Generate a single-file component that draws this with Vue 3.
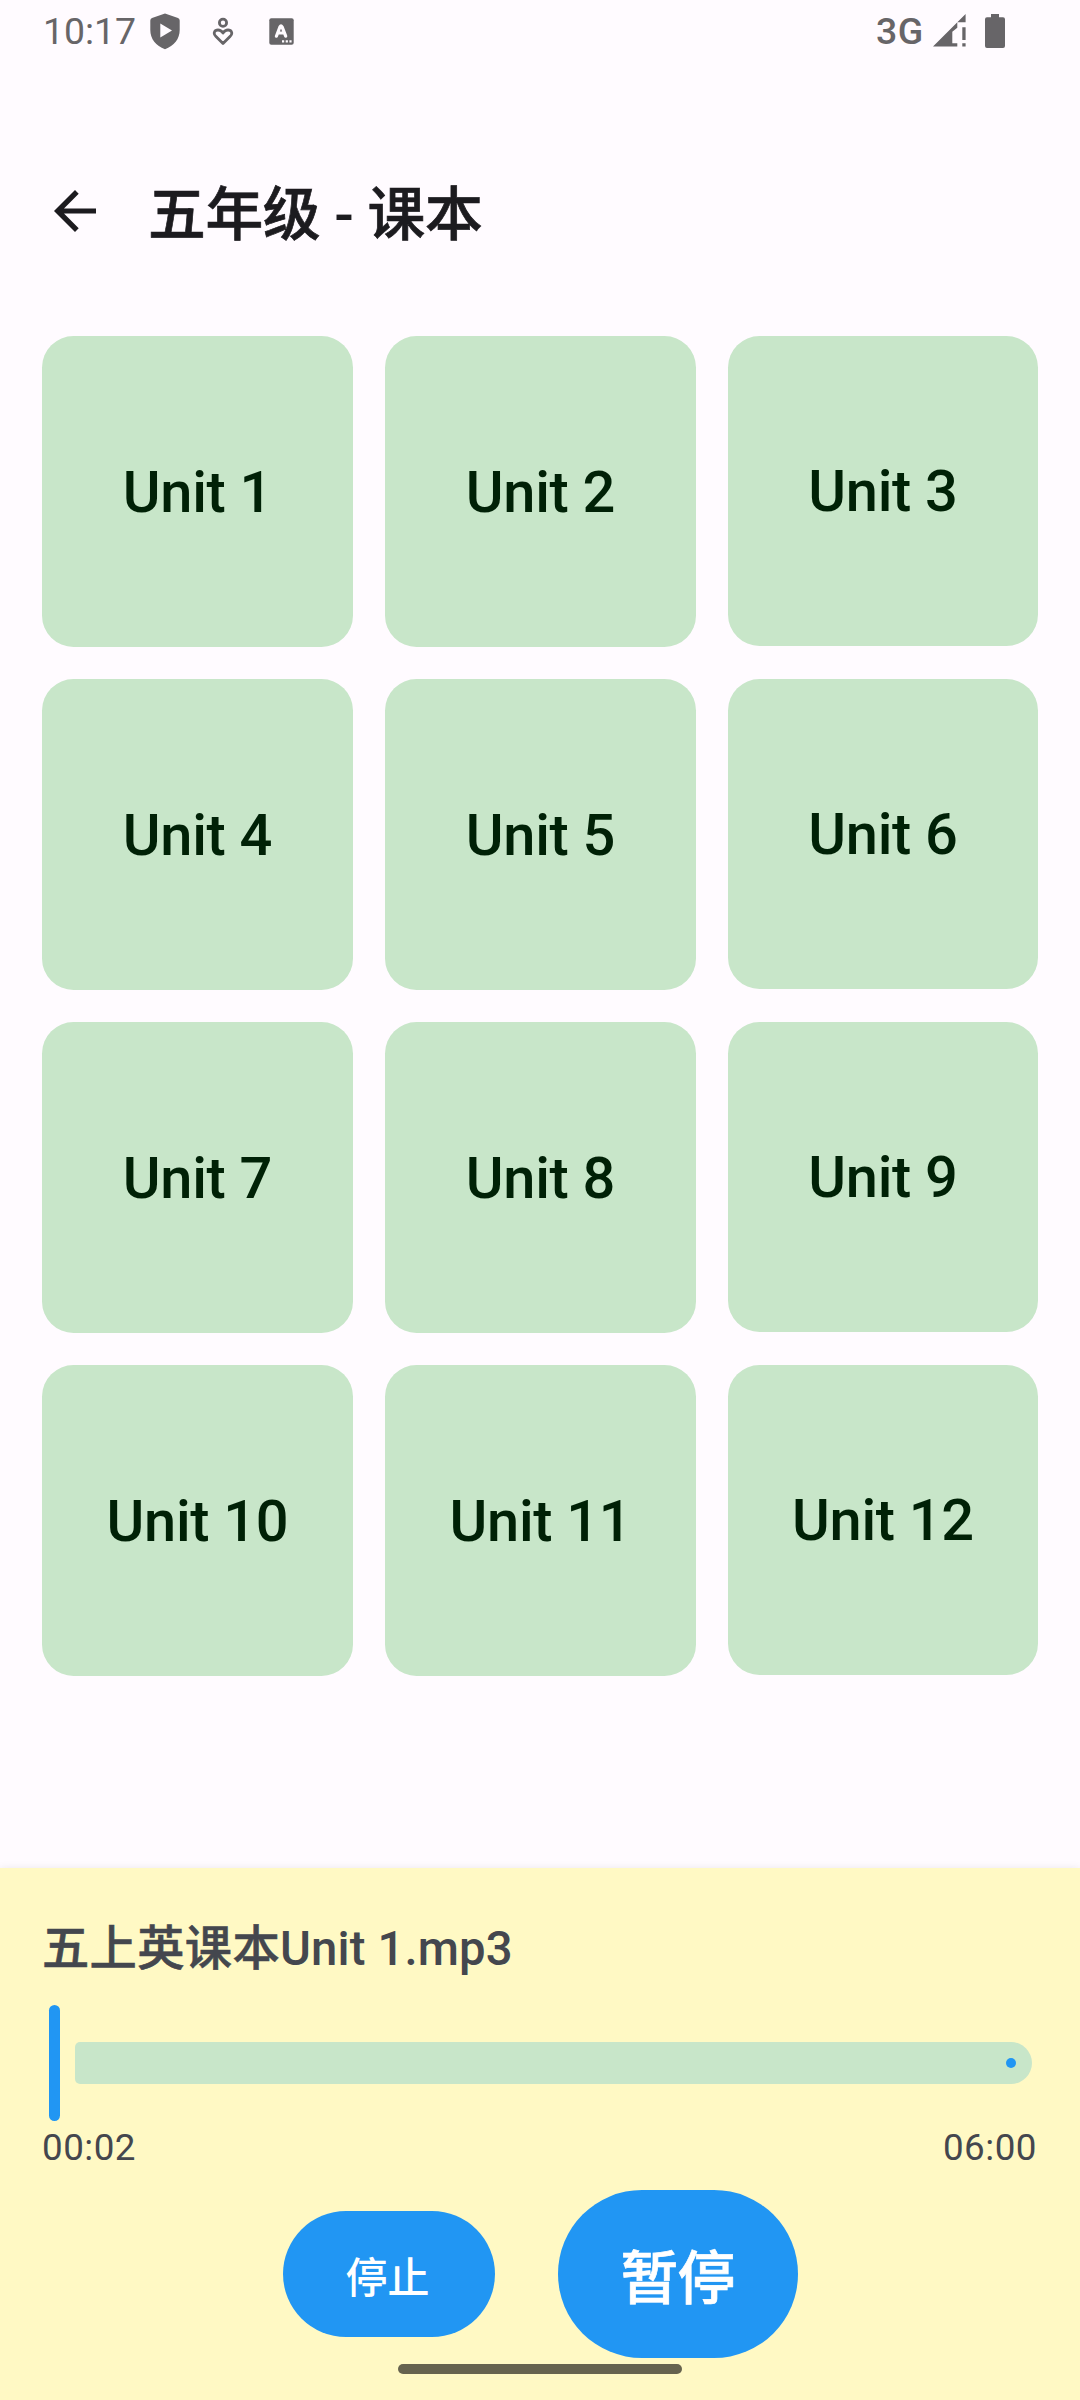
<script setup>
import { ref } from 'vue'

const units = ref(Array.from({ length: 12 }, (_, i) => `Unit ${i + 1}`))
const track = ref({ book: '五上英课本', file: 'Unit 1.mp3', position: '00:02', duration: '06:00' })
</script>

<template>
  <div class="screen">
    <header class="status">
      <span class="clock">10:17</span>
      <svg class="shield" width="30" height="37" viewBox="0 0 30 37">
        <path fill="#676568" fill-rule="evenodd" d="M15 0.5 28 5Q29.7 5.8 29.7 7.5V17C29.7 26 24 33 15 36.2 6 33 .3 26 .3 17V7.5Q.3 5.8 2 5ZM10.3 10.5V24.5L22 17.5Z" />
      </svg>
      <svg class="care" width="22" height="30" viewBox="0 0 22 30" fill="none" stroke="#676568" stroke-width="2.8">
        <circle cx="11" cy="5.7" r="3.6" />
        <path stroke-linejoin="round" d="M11 26.6 4 19.6C.5 16 2.8 13 6 13 8.3 13 9.6 14 11 16 12.4 14 13.7 13 16 13 19.2 13 21.5 16 18 19.6Z" />
      </svg>
      <svg class="caption" width="25" height="27" viewBox="0 0 25 27">
        <rect x=".3" y=".3" width="24.4" height="26.4" rx="2" fill="#676568" />
        <path d="M7.4 18.2 11 8.7Q12 7 13 8.7L16.7 18.2M9.2 15H15" fill="none" stroke="#fffbff" stroke-width="3.2" stroke-linejoin="round" stroke-linecap="round" />
        <path d="M13 22.2h2.2v2.2H13zM16.7 22.2h2.2v2.2h-2.2zM20.4 22.2h2.2v2.2h-2.2z" fill="#fffbff" />
      </svg>
      <span class="network">3G</span>
      <svg class="signal" width="34" height="33" viewBox="0 0 34 33" fill="#676568">
        <path d="M0 32.6 32.6 0V8.3H24.3V13.7L19.3 17.7V29.3H24.3V32.6Z" />
        <path d="M29.3 13.3h3.3v12.7H29.3zM29.3 29.3h3.3v3.3H29.3z" />
      </svg>
      <svg class="battery" width="20" height="34" viewBox="0 0 20 34" fill="#676568">
        <path d="M6 0h8v3.2h4q2 0 2 2V32q0 2-2 2H2q-2 0-2-2V5.2q0-2 2-2h4z" />
      </svg>
    </header>

    <div class="appbar">
      <svg class="back" width="42" height="42" viewBox="0 0 42 42">
        <path d="M21 0 24.7 3.7 10 18.4H42V23.6H10L24.7 38.3 21 42 0 21Z" fill="#1c1b1f" />
      </svg>
      <h1><span class="han">五年级</span> - <span class="han">课本</span></h1>
    </div>

    <main class="grid">
      <button v-for="unit in units" :key="unit" class="tile"><span>{{ unit }}</span></button>
    </main>

    <section class="player">
      <h2><span class="han book">{{ track.book }}</span>{{ track.file }}</h2>
      <div class="slider">
        <div class="thumb"></div>
        <div class="track"><i></i></div>
      </div>
      <div class="times">
        <span>{{ track.position }}</span>
        <span>{{ track.duration }}</span>
      </div>
      <div class="controls">
        <button class="stop">停止</button>
        <button class="pause han">暂停</button>
      </div>
      <div class="home"></div>
    </section>
  </div>
</template>

<style>
body {
  background: #fffbff;
}
</style>

<style scoped>
.screen {
  width: 1080px;
  height: 2400px;
  display: flex;
  flex-direction: column;
  overflow: hidden;
  background: #fffbff;
  font-family: Roboto, "Noto Sans CJK SC", sans-serif;
}
button {
  border: 0;
  padding: 0;
  font: inherit;
}
.han {
  -webkit-text-stroke: 0.012em currentColor;
}
.status {
  display: flex;
  height: 62px;
  box-sizing: border-box;
  padding-left: 43px;
  color: #676568;
  font-size: 37.4px;
  line-height: 63px;
}
.status svg { flex: none; }
.clock { width: 107px; }
.shield { margin-top: 13px; }
.care { margin: 17px 0 0 32px; }
.caption { margin: 18px 0 0 35px; }
.network {
  width: 58px;
  margin-left: 582px;
  font-weight: 470;
  letter-spacing: 0.5px;
}
.signal { margin: 14px 0 0 -1px; }
.battery { margin: 14px 0 0 18px; }
.appbar {
  display: flex;
  align-items: center;
  height: 168px;
  margin: 64px 0 42px;
  padding: 1px 54px 0;
  gap: 52px;
  box-sizing: border-box;
}
h1 {
  margin: 10px 0 0;
  font-size: 57.75px;
  line-height: 73.5px;
  font-weight: 500;
  letter-spacing: -0.35px;
  color: #1c1b1f;
}
.grid {
  display: grid;
  grid-template-columns: 311px 311px 310px;
  grid-auto-rows: 311px;
  gap: 32px;
  padding: 0 42px;
}
.tile {
  display: flex;
  align-items: center;
  justify-content: center;
  border-radius: 31.5px;
  background: #c8e6c9;
  color: #002106;
  font-size: 57.75px;
  font-weight: 530;
  letter-spacing: -0.3px;
}
.tile:nth-child(3n) { height: 310px; }
.player {
  margin-top: auto;
  height: 532px;
  box-sizing: border-box;
  padding: 42px 42px 26px;
  display: flex;
  flex-direction: column;
  background: #fff9c4;
  color: #44474e;
  box-shadow: 0 0 8px rgba(0, 0, 0, 0.08);
}
h2 {
  margin: 0;
  height: 78px;
  line-height: 78px;
  font-size: 47.25px;
  font-weight: 500;
  letter-spacing: 0.15px;
}
.book { letter-spacing: 0.35px; }
.slider {
  display: flex;
  align-items: center;
  height: 116px;
  margin-top: 17px;
  padding: 0 6px 0 7px;
  gap: 15px;
}
.thumb {
  width: 11px;
  height: 116px;
  border-radius: 6px;
  background: #2196f3;
}
.track {
  flex: 1;
  display: flex;
  align-items: center;
  justify-content: flex-end;
  height: 42px;
  box-sizing: border-box;
  padding-right: 16px;
  border-radius: 5px 21px 21px 5px;
  background: #c8e6c9;
}
.track i {
  width: 10.5px;
  height: 10.5px;
  border-radius: 50%;
  background: #2196f3;
}
.times {
  display: flex;
  justify-content: space-between;
  height: 52px;
  padding-right: 1px;
  line-height: 54px;
  font-size: 36.75px;
  letter-spacing: 0.5px;
}
.controls {
  display: flex;
  align-items: center;
  justify-content: center;
  gap: 63px;
  height: 168px;
  margin-top: 17px;
}
.controls button {
  background: #2196f3;
  color: #fff;
  font-weight: 500;
}
.controls .stop {
  width: 212px;
  height: 126px;
  padding-right: 2px;
  border-radius: 63px;
  font-size: 42px;
}
.controls .pause {
  width: 240px;
  height: 168px;
  border-radius: 84px;
  font-size: 57.75px;
  letter-spacing: -0.8px;
}
.home {
  align-self: center;
  width: 284px;
  height: 10px;
  margin-top: 6px;
  border-radius: 5px;
  background: #66634e;
}
</style>
